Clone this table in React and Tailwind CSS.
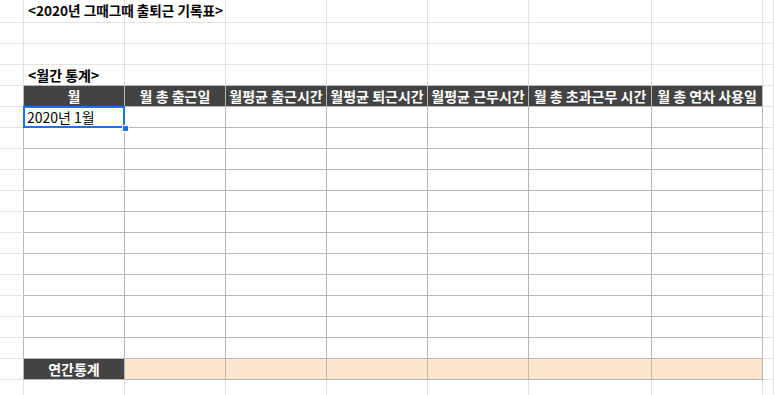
import React from "react";

const COLS = "grid grid-cols-[24px_101px_101px_101px_101px_101px_123px_111px_1fr]";
const HEADERS = ["월", "월 총 출근일", "월평균 출근시간", "월평균 퇴근시간", "월평균 근무시간", "월 총 초과근무 시간", "월 총 연차 사용일"];
const FONT = "font-['Malgun_Gothic','Noto_Sans_CJK_KR',sans-serif]";

function Cell({ children, className = "" }) {
  return <div className={`border-r border-b overflow-visible whitespace-nowrap text-[14px] leading-none flex items-center ${className}`}>{children}</div>;
}

function PlainRow({ height = "h-[21px]", first = null, tableTop = false }) {
  return (
    <div className={`${COLS} ${height}`}>
      <Cell className="border-[#e2e2e3]" />
      {Array.from({ length: 7 }).map((_, i) => (
        <Cell
          key={i}
          className={
            tableTop
              ? "border-r-[#e2e2e3] border-b-[#b7b7b7] font-bold text-black pl-[4px]"
              : "border-[#e2e2e3] font-bold text-black pl-[4px]"
          }
        >
          {i === 0 ? first : null}
        </Cell>
      ))}
      <Cell className="border-[#e2e2e3]" />
    </div>
  );
}

export default function App() {
  return (
    <div className={`w-[774px] h-[395px] overflow-hidden bg-white ${FONT}`}>
      <PlainRow
        height="h-[23px]"
        first={<span className="relative z-10 font-bold text-[13.6px]">&lt;2020년 그때그때 출퇴근 기록표&gt;</span>}
      />
      <PlainRow />
      <PlainRow />
      <PlainRow tableTop first={<span className="font-bold">&lt;월간 통계&gt;</span>} />

      {/* header row */}
      <div className={`${COLS} h-[21px]`}>
        <Cell className="border-b-[#e2e2e3] border-r-[#b7b7b7]" />
        {HEADERS.map((h) => (
          <Cell key={h} className="border-[#b7b7b7] bg-[#434343] text-white font-bold justify-center">
            {h}
          </Cell>
        ))}
        <Cell className="border-[#e2e2e3]" />
      </div>

      {/* data rows */}
      {Array.from({ length: 12 }).map((_, r) => (
        <div key={r} className={`${COLS} h-[21px]`}>
          <Cell className="border-b-[#e2e2e3] border-r-[#b7b7b7]" />
          {Array.from({ length: 7 }).map((_, c) => (
            <Cell key={c} className="border-[#b7b7b7] relative pl-[3px] text-black">
              {r === 0 && c === 0 ? (
                <>
                  <span>2020년 1월</span>
                  <div className="absolute left-[-1px] top-[-1px] w-[102px] h-[22px] border-2 border-[#1a73e8]" />
                  <div className="absolute right-[-5px] bottom-[-5px] w-[7px] h-[7px] bg-[#1a73e8] border border-white z-10" />
                </>
              ) : null}
            </Cell>
          ))}
          <Cell className="border-[#e2e2e3]" />
        </div>
      ))}

      {/* yearly summary row */}
      <div className={`${COLS} h-[21px]`}>
        <Cell className="border-b-[#e2e2e3] border-r-[#b7b7b7]" />
        <Cell className="border-[#b7b7b7] bg-[#434343] text-white font-bold justify-center">연간통계</Cell>
        {Array.from({ length: 6 }).map((_, c) => (
          <Cell key={c} className="border-[#b7b7b7] bg-[#fce5cd]" />
        ))}
        <Cell className="border-[#e2e2e3]" />
      </div>

      <PlainRow />
    </div>
  );
}
